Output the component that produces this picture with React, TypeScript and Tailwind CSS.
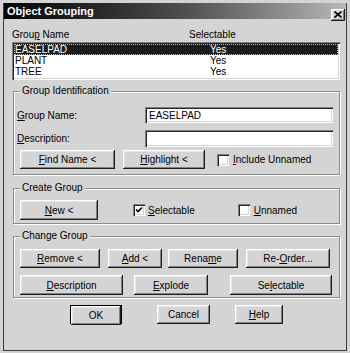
import type { ReactNode } from "react";

const raised =
  "flex items-center justify-center bg-[#d4d4d4] text-black shadow-[inset_-1px_-1px_0_#1e1e1e,inset_1px_1px_0_#ffffff,inset_-2px_-2px_0_#808080,inset_2px_2px_0_#e4e4e4]";
const sunken =
  "bg-white shadow-[inset_1px_1px_0_#808080,inset_2px_2px_0_#262626,inset_-1px_-1px_0_#ffffff,inset_-2px_-2px_0_#d4d4d4]";

function Btn({ children, className = "" }: { children: ReactNode; className?: string }) {
  return <div className={`${raised} h-[19px] ${className}`}>{children}</div>;
}

function Check({ checked = false }: { checked?: boolean }) {
  return (
    <div className={`${sunken} flex h-[12px] w-[12px] shrink-0 items-center justify-center`}>
      {checked && (
        <svg width="8" height="8" viewBox="0 0 8 8">
          <path d="M1 3.5 L3 5.5 L7 1.5" stroke="#000" strokeWidth="1.6" fill="none" />
        </svg>
      )}
    </div>
  );
}

function GroupBox({ label, className = "", children }: { label: string; className?: string; children: ReactNode }) {
  return (
    <fieldset
      className={`relative border border-[#8a8a8a] shadow-[1px_1px_0_#ffffff,inset_1px_1px_0_#ffffff] ${className}`}
    >
      <span className="absolute left-[6px] top-[-7px] bg-[#d4d4d4] px-[2px] leading-[12px]">{label}</span>
      {children}
    </fieldset>
  );
}

const rows = [
  { name: "EASELPAD", sel: "Yes" },
  { name: "PLANT", sel: "Yes" },
  { name: "TREE", sel: "Yes" }
];

export default function App() {
  return (
    <div
      className="h-[353px] w-[350px] bg-[#d4d4d4] p-[3px] text-[10px] text-black"
      style={{ fontFamily: '"Liberation Sans", Arial, sans-serif' }}
    >
      <div className="flex h-[348px] flex-col border-x border-b border-[#3c3c3c]">
        <div className="flex h-[16px] shrink-0 items-center justify-between bg-linear-to-r from-[#060606] via-[#4a4a4a] to-[#b8b8b8] pl-[3px] pr-[1px]">
          <span className="text-[11px] font-bold leading-none text-white">Object Grouping</span>
          <div className={`${raised} mt-[7px] h-[12px] w-[14px] text-[11px] font-bold leading-none`}>
            <svg width="8" height="7" viewBox="0 0 8 7">
              <path d="M0.5 0.5 L7.5 6.5 M7.5 0.5 L0.5 6.5" stroke="#000" strokeWidth="1.6" />
            </svg>
          </div>
        </div>

        <div className="flex flex-col pl-[8px] pr-[6px]">
          <div className="mt-[7px] flex h-[16px] items-center">
            <span className="w-[177px]">
              Grou<u>p</u> Name
            </span>
            <span>Selectable</span>
          </div>

          <div className={`${sunken} h-[38px] pt-[2px] pl-[2px] pr-[2px]`}>
            {rows.map((r, i) => (
              <div
                key={r.name}
                className={`flex h-[11px] items-center leading-none ${
                  i === 0 ? "bg-[#1c1c1c] text-white outline outline-1 outline-dotted outline-[#bbbbbb] -outline-offset-1" : ""
                }`}
              >
                <span className="w-[196px] pl-[1px]">{r.name}</span>
                <span>{r.sel}</span>
              </div>
            ))}
          </div>

          <GroupBox label="Group Identification" className="ml-[1px] mt-[11px] h-[84px]">
            <div className="mt-[15px] flex items-center pl-[3px] pr-[6px]">
              <span className="w-[128px]">
                <u>G</u>roup Name:
              </span>
              <div className={`${sunken} flex h-[16px] flex-1 items-center pl-[4px]`}>EASELPAD</div>
            </div>
            <div className="mt-[7px] flex items-center pl-[3px] pr-[6px]">
              <span className="w-[128px]">
                <u>D</u>escription:
              </span>
              <div className={`${sunken} h-[17px] flex-1`} />
            </div>
            <div className="mt-[3px] flex items-center pl-[6px]">
              <Btn className="w-[95px]">
                <u>F</u>ind Name &lt;
              </Btn>
              <Btn className="ml-[8px] w-[82px]">
                <u>H</u>ighlight &lt;
              </Btn>
              <div className="ml-[12px] flex items-center gap-[4px]">
                <Check />
                <span>
                  <u>I</u>nclude Unnamed
                </span>
              </div>
            </div>
          </GroupBox>

          <GroupBox label="Create Group" className="ml-[1px] mt-[13px] h-[36px]">
            <div className="mt-[11px] flex items-center pl-[6px]">
              <Btn className="h-[20px] w-[78px]">
                <u>N</u>ew &lt;
              </Btn>
              <div className="ml-[35px] flex items-center gap-[3px]">
                <Check checked />
                <span>
                  <u>S</u>electable
                </span>
              </div>
              <div className="ml-[43px] flex items-center gap-[4px]">
                <Check />
                <span>
                  <u>U</u>nnamed
                </span>
              </div>
            </div>
          </GroupBox>

          <GroupBox label="Change Group" className="ml-[1px] mt-[12px] h-[62px]">
            <div className="mt-[12px] flex items-center pl-[6px]">
              <Btn className="w-[80px]">
                <u>R</u>emove &lt;
              </Btn>
              <Btn className="ml-[8px] w-[54px]">
                <u>A</u>dd &lt;
              </Btn>
              <Btn className="ml-[6px] w-[70px]">
                Rena<u>m</u>e
              </Btn>
              <Btn className="ml-[8px] w-[84px]">
                Re-<u>O</u>rder...
              </Btn>
            </div>
            <div className="mt-[7px] flex items-center pl-[6px]">
              <Btn className="h-[20px] w-[103px]">
                <u>D</u>escription
              </Btn>
              <Btn className="ml-[11px] h-[20px] w-[74px]">
                <u>E</u>xplode
              </Btn>
              <Btn className="ml-[22px] h-[20px] w-[102px]">
                Se<u>l</u>ectable
              </Btn>
            </div>
          </GroupBox>

          <div className="mt-[7px] flex items-center">
            <div className="ml-[58px] h-[19px] w-[52px] border border-black">
              <Btn className="h-[17px] w-full">OK</Btn>
            </div>
            <Btn className="ml-[35px] w-[53px]">Cancel</Btn>
            <Btn className="ml-[25px] w-[48px]">
              <u>H</u>elp
            </Btn>
          </div>
        </div>
      </div>
    </div>
  );
}
